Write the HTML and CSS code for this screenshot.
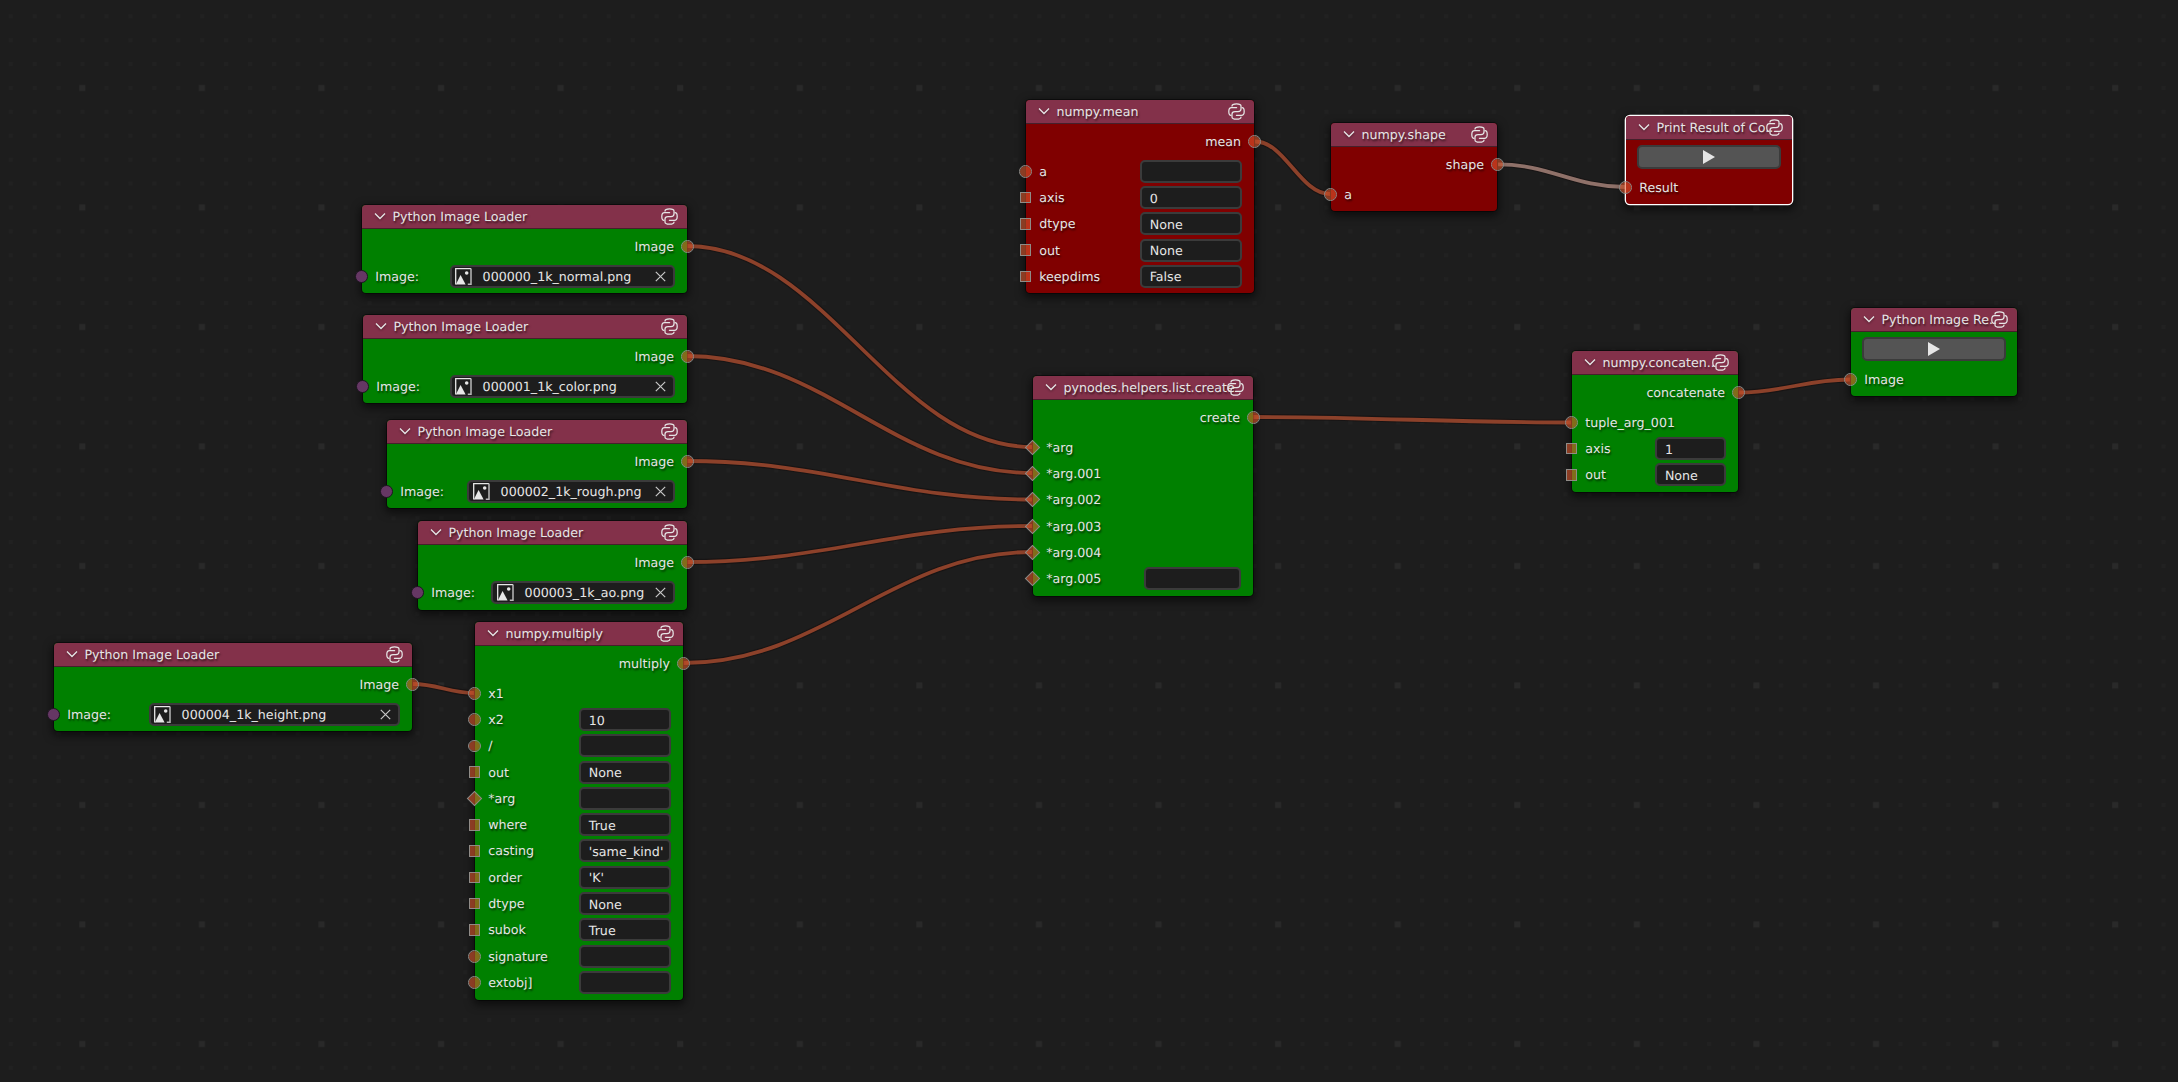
FILE: index.html
```
<!DOCTYPE html>
<html lang="en">
<head>
<meta charset="utf-8">
<title>Node Editor</title>
<link rel="stylesheet" href="styles.css">
</head>
<body>
<svg class="sprites" width="0" height="0">
  <symbol id="py" viewBox="0 0 17 17"><g fill="none" stroke="currentColor" stroke-width="1.25" stroke-linecap="round"><path d="M8.6 4.7H3.6C1.5 4.7.8 6.5.8 8.5S1.5 12.3 3 12.3"/><path d="M4 3C4 1.2 5.5.8 8.5.8S13 1.2 13 3V6C13 8 12 8.5 10 8.5H7C5 8.5 4 9 4 11V14c0 1.8 1.5 2.2 4.5 2.2S13 15.8 13 14"/><path d="M8.4 12.3h5c2.1 0 2.8-1.8 2.8-3.8S15.5 4.7 14 4.7"/></g></symbol>
  <symbol id="chev" viewBox="0 0 12 8"><path d="M1 1.5l5 5 5-5" fill="none" stroke="currentColor" stroke-width="1.3"/></symbol>
  <symbol id="pic" viewBox="0 0 17 17"><path d="M.7 16.5V.7H16" fill="none" stroke="#e6e6e6" stroke-width="1.3"/><path d="M16 .5V16.2H12.8" fill="none" stroke="#b8b8b8" stroke-width="1.5"/><path d="M.8 16.6L5.6 7l5 9.6z" fill="#e6e6e6"/><circle cx="11.7" cy="5" r="1.8" fill="#e6e6e6"/></symbol>
  <symbol id="close" viewBox="0 0 11 11"><path d="M.8.8l9.4 9.4M10.2.8L.8 10.2" stroke="#c8c8c8" stroke-width="1.2"/></symbol>
  <symbol id="play" viewBox="0 0 12 14"><path d="M0 0L12 7 0 14z" fill="#e6e6e6"/></symbol>
</svg>
<main class="editor">
  <svg class="canvas" width="2178" height="1082">
    <defs>
      <pattern id="small" patternUnits="userSpaceOnUse" x="-1.2" y="4.3" width="23.92" height="23.9"><rect x="10" y="10" width="4" height="4" fill="#212121"/></pattern>
      <pattern id="big" patternUnits="userSpaceOnUse" x="22.3" y="28" width="119.58" height="119.5"><rect x="57" y="57" width="6" height="6" fill="#292929"/></pattern>
      <g id="noodles">
        <path d="M687 246C825 246 894 447 1032 447"/><path d="M687 356C825 356 894 473 1032 473"/><path d="M687 461C825 461 894 499.500 1032 499.500"/><path d="M687 562C825 562 894 526 1032 526"/><path d="M683.500 663C823 663 893 552 1032 552"/><path d="M413 684C437.400 684 449.600 693 474 693"/><path d="M1253 417C1380 417 1444 422.500 1571 422.500"/><path d="M1739 392.500C1783 392.500 1806 379.500 1850 379.500"/><path d="M1255 141.500C1285 141.500 1300 194 1330 194"/><path class="active" d="M1498 164.300C1549 164.300 1574 187 1625 187"/>
      </g>
    </defs>
    <rect width="2178" height="1082" fill="url(#small)"/>
    <rect width="2178" height="1082" fill="url(#big)"/>
    <use href="#noodles" class="link-edge"/>
    <g class="links">
      <path d="M687 246C825 246 894 447 1032 447"/><path d="M687 356C825 356 894 473 1032 473"/><path d="M687 461C825 461 894 499.500 1032 499.500"/><path d="M687 562C825 562 894 526 1032 526"/><path d="M683.500 663C823 663 893 552 1032 552"/><path d="M413 684C437.400 684 449.600 693 474 693"/><path d="M1253 417C1380 417 1444 422.500 1571 422.500"/><path d="M1739 392.500C1783 392.500 1806 379.500 1850 379.500"/><path d="M1255 141.500C1285 141.500 1300 194 1330 194"/><path class="active" d="M1498 164.300C1549 164.300 1574 187 1625 187"/>
    </g>
  </svg>

  <section class="node n-normal">
    <header><svg class="chev"><use href="#chev"/></svg><span>Python Image Loader</span><svg class="py"><use href="#py"/></svg></header>
    <div class="row out"><span>Image</span><i class="socket"></i></div>
    <div class="row"><i class="socket obj"></i><span>Image:</span><div class="field file"><svg class="pic"><use href="#pic"/></svg><span>000000_1k_normal.png</span><svg class="close"><use href="#close"/></svg></div></div>
  </section>
  <section class="node n-color">
    <header><svg class="chev"><use href="#chev"/></svg><span>Python Image Loader</span><svg class="py"><use href="#py"/></svg></header>
    <div class="row out"><span>Image</span><i class="socket"></i></div>
    <div class="row"><i class="socket obj"></i><span>Image:</span><div class="field file"><svg class="pic"><use href="#pic"/></svg><span>000001_1k_color.png</span><svg class="close"><use href="#close"/></svg></div></div>
  </section>
  <section class="node n-rough">
    <header><svg class="chev"><use href="#chev"/></svg><span>Python Image Loader</span><svg class="py"><use href="#py"/></svg></header>
    <div class="row out"><span>Image</span><i class="socket"></i></div>
    <div class="row"><i class="socket obj"></i><span>Image:</span><div class="field file"><svg class="pic"><use href="#pic"/></svg><span>000002_1k_rough.png</span><svg class="close"><use href="#close"/></svg></div></div>
  </section>
  <section class="node n-ao">
    <header><svg class="chev"><use href="#chev"/></svg><span>Python Image Loader</span><svg class="py"><use href="#py"/></svg></header>
    <div class="row out"><span>Image</span><i class="socket"></i></div>
    <div class="row"><i class="socket obj"></i><span>Image:</span><div class="field file"><svg class="pic"><use href="#pic"/></svg><span>000003_1k_ao.png</span><svg class="close"><use href="#close"/></svg></div></div>
  </section>
  <section class="node n-height">
    <header><svg class="chev"><use href="#chev"/></svg><span>Python Image Loader</span><svg class="py"><use href="#py"/></svg></header>
    <div class="row out"><span>Image</span><i class="socket"></i></div>
    <div class="row"><i class="socket obj"></i><span>Image:</span><div class="field file"><svg class="pic"><use href="#pic"/></svg><span>000004_1k_height.png</span><svg class="close"><use href="#close"/></svg></div></div>
  </section>

  <section class="node n-multiply">
    <header><svg class="chev"><use href="#chev"/></svg><span>numpy.multiply</span><svg class="py"><use href="#py"/></svg></header>
    <div class="row out"><span>multiply</span><i class="socket"></i></div>
    <div class="row"><i class="socket"></i><span>x1</span></div>
    <div class="row"><i class="socket"></i><span>x2</span><div class="field">10</div></div>
    <div class="row"><i class="socket"></i><span>/</span><div class="field"></div></div>
    <div class="row"><i class="socket square"></i><span>out</span><div class="field">None</div></div>
    <div class="row"><i class="socket diamond"></i><span>*arg</span><div class="field"></div></div>
    <div class="row"><i class="socket square"></i><span>where</span><div class="field">True</div></div>
    <div class="row"><i class="socket square"></i><span>casting</span><div class="field">'same_kind'</div></div>
    <div class="row"><i class="socket square"></i><span>order</span><div class="field">'K'</div></div>
    <div class="row"><i class="socket square"></i><span>dtype</span><div class="field">None</div></div>
    <div class="row"><i class="socket square"></i><span>subok</span><div class="field">True</div></div>
    <div class="row"><i class="socket"></i><span>signature</span><div class="field"></div></div>
    <div class="row"><i class="socket"></i><span>extobj]</span><div class="field"></div></div>
  </section>

  <section class="node red n-mean">
    <header><svg class="chev"><use href="#chev"/></svg><span>numpy.mean</span><svg class="py"><use href="#py"/></svg></header>
    <div class="row out"><span>mean</span><i class="socket"></i></div>
    <div class="row"><i class="socket"></i><span>a</span><div class="field"></div></div>
    <div class="row"><i class="socket square"></i><span>axis</span><div class="field">0</div></div>
    <div class="row"><i class="socket square"></i><span>dtype</span><div class="field">None</div></div>
    <div class="row"><i class="socket square"></i><span>out</span><div class="field">None</div></div>
    <div class="row"><i class="socket square"></i><span>keepdims</span><div class="field">False</div></div>
  </section>
  <section class="node red n-shape">
    <header><svg class="chev"><use href="#chev"/></svg><span>numpy.shape</span><svg class="py"><use href="#py"/></svg></header>
    <div class="row out"><span>shape</span><i class="socket"></i></div>
    <div class="row"><i class="socket"></i><span>a</span></div>
  </section>
  <section class="node red selected n-print">
    <header><svg class="chev"><use href="#chev"/></svg><span>Print Result of Co..</span><svg class="py"><use href="#py"/></svg></header>
    <div class="row out"><button type="button" aria-label="Run"><svg class="play"><use href="#play"/></svg></button></div>
    <div class="row"><i class="socket"></i><span>Result</span></div>
  </section>

  <section class="node n-create">
    <header><svg class="chev"><use href="#chev"/></svg><span>pynodes.helpers.list.create</span><svg class="py"><use href="#py"/></svg></header>
    <div class="row out"><span>create</span><i class="socket"></i></div>
    <div class="row"><i class="socket diamond"></i><span>*arg</span></div>
    <div class="row"><i class="socket diamond"></i><span>*arg.001</span></div>
    <div class="row"><i class="socket diamond"></i><span>*arg.002</span></div>
    <div class="row"><i class="socket diamond"></i><span>*arg.003</span></div>
    <div class="row"><i class="socket diamond"></i><span>*arg.004</span></div>
    <div class="row"><i class="socket diamond"></i><span>*arg.005</span><div class="field"></div></div>
  </section>
  <section class="node n-concat">
    <header><svg class="chev"><use href="#chev"/></svg><span>numpy.concaten..</span><svg class="py"><use href="#py"/></svg></header>
    <div class="row out"><span>concatenate</span><i class="socket"></i></div>
    <div class="row"><i class="socket"></i><span>tuple_arg_001</span></div>
    <div class="row"><i class="socket square"></i><span>axis</span><div class="field">1</div></div>
    <div class="row"><i class="socket square"></i><span>out</span><div class="field">None</div></div>
  </section>
  <section class="node n-result">
    <header><svg class="chev"><use href="#chev"/></svg><span>Python Image Re..</span><svg class="py"><use href="#py"/></svg></header>
    <div class="row out"><button type="button" aria-label="Run"><svg class="play"><use href="#play"/></svg></button></div>
    <div class="row"><i class="socket"></i><span>Image</span></div>
  </section>
</main>
</body>
</html>
```
FILE: styles.css
```
* { box-sizing: border-box; }
body {
  margin: 0;
  background: #1d1d1d;
  color: #e6e6e6;
  font: 12.65px/20px "DejaVu Sans", sans-serif;
  text-rendering: geometricPrecision;
}
.sprites { position: absolute; }
.editor { position: relative; width: 2178px; height: 1082px; overflow: hidden; }
.canvas { display: block; }
.links path { fill: none; stroke: #8c412a; stroke-width: 3.8; }
.link-edge { fill: none; stroke: #120c0a; stroke-opacity: .45; stroke-width: 6; }
.links path.active { stroke: #8f7169; }

.node {
  position: absolute;
  padding-bottom: 4px;
  background: #008000;
  border-radius: 4px;
  box-shadow: 0 0 0 1px rgba(0, 0, 0, .45), 0 3px 9px 2px rgba(0, 0, 0, .55);
  white-space: nowrap;
}
.node.red { background: #800000; }
.node.selected { box-shadow: 0 0 0 1.3px #fff, 0 3px 9px 3px rgba(0, 0, 0, .55); }
.node header {
  position: relative;
  display: flex;
  align-items: center;
  height: 24px;
  padding: 0 0 1px 12px;
  background: #83314a;
  border-bottom: 1px solid #45202b;
  border-radius: 4px 4px 0 0;
  text-shadow: 1px 2px 2px rgba(0, 0, 0, .55);
}
.node header span { padding-top: 2px; }
.chev { width: 12px; height: 8px; margin-right: 6.5px; filter: drop-shadow(0 1px 1px rgba(0, 0, 0, .4)); }
.py { position: absolute; right: 9px; top: 3.2px; width: 17px; height: 17px; }

.row {
  position: relative;
  display: flex;
  align-items: center;
  height: 26.3px;
  padding: 0 11.6px 0 13.2px;
}
.row > span { padding-top: 1px; text-shadow: 1px 2px 2px rgba(0, 0, 0, .6); }
.row.out { justify-content: flex-end; margin: 4px 0 3.7px; padding-right: 13px; }

.socket {
  position: absolute;
  left: -7px;
  top: 7px;
  width: 12.8px;
  height: 12.8px;
  background: rgba(235, 92, 48, .55);
  background-clip: padding-box;
  border: 1.5px solid #8f8b87;
  border-radius: 50%;
}
.out .socket { left: auto; right: -6.9px; }
.socket.square { border-radius: 0; width: 11.6px; height: 11.6px; left: -6.2px; top: 7.5px; }
.socket.diamond { border-radius: 0; width: 11px; height: 11px; left: -6.1px; top: 7.8px; transform: rotate(45deg); }
.socket.obj { background: #653764; border-color: #1c1520; width: 12.6px; height: 12.6px; left: -6.8px; }

.field {
  width: 92.6px;
  height: 23px;
  margin-left: auto;
  padding: .6px 0 0 8px;
  background: #1d1d1d;
  border: 2px solid #3b3b3b;
  border-radius: 5px;
  line-height: 19.6px;
}
.field.file { display: flex; align-items: center; padding: 0 7px 0 3px; }
.field.file span { margin-left: 10.2px; padding-top: .6px; }
.pic { width: 17px; height: 17px; }
.close { width: 11px; height: 11px; margin-left: auto; }
.row button {
  display: flex;
  align-items: center;
  justify-content: center;
  width: 144px;
  height: 24px;
  margin: 0;
  padding: 0;
  background: #545454;
  border: 2px solid #3b3b3b;
  border-radius: 5px;
}
.play { width: 12px; height: 14px; }
.n-print .out, .n-result .out { padding: 0 11.3px 0 0; }

.n-normal { left: 362px; top: 205px; width: 325px; }
.n-normal .field { width: 225px; }
.n-color { left: 363px; top: 315px; width: 324px; }
.n-color .field { width: 225px; }
.n-rough { left: 387px; top: 420px; width: 300px; }
.n-rough .field { width: 208px; padding-left: 4px; }
.n-ao { left: 418px; top: 521.3px; width: 269px; }
.n-ao .field { width: 184px; padding-left: 4px; }
.n-height { left: 54px; top: 643px; width: 358px; }
.n-height .field { width: 251px; }
.n-multiply { left: 475px; top: 622px; width: 208px; }
.n-mean { left: 1026px; top: 100px; width: 228px; }
.n-mean .field { width: 102.7px; }
.n-shape { left: 1331px; top: 123px; width: 166px; }
.n-print { left: 1626px; top: 116px; width: 166px; }
.n-create { left: 1033px; top: 376px; width: 220px; }
.n-create .field { width: 97.6px; }
.n-concat { left: 1572px; top: 351px; width: 166px; }
.n-concat .field { width: 71.5px; }
.n-result { left: 1851px; top: 308px; width: 166px; }
```
